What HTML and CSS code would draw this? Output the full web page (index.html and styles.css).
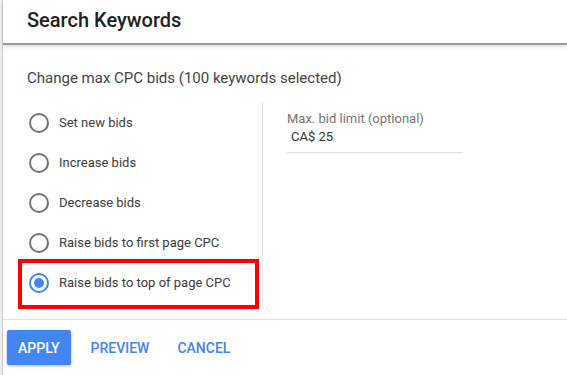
FILE: index.html
```html
<!DOCTYPE html>
<html lang="en">
<head>
    <meta charset="UTF-8">
    <meta name="viewport" content="width=device-width, initial-scale=1.0">
    <title>Search Keywords</title>
    <link rel="stylesheet" href="styles.css">
</head>
<body>
    <div class="dialog">
        <div class="dialog_head">
            <h1>Search Keywords</h1>
        </div>
        <div class="dialog_body">
            <p class="subtitle">Change max CPC bids (100 keywords selected)</p>
            <div class="cols">
                <div class="options">
                    <label class="option"><span class="radio"></span><span>Set new bids</span></label>
                    <label class="option"><span class="radio"></span><span>Increase bids</span></label>
                    <label class="option"><span class="radio"></span><span>Decrease bids</span></label>
                    <label class="option"><span class="radio"></span><span>Raise bids to first page CPC</span></label>
                    <label class="option marked"><span class="radio checked"></span><span>Raise bids to top of page CPC</span></label>
                </div>
                <div class="limit">
                    <div class="field">
                        <span class="field_label">Max. bid limit (optional)</span>
                        <span class="field_value">CA$ 25</span>
                    </div>
                </div>
            </div>
        </div>
        <div class="dialog_foot">
            <button type="button" class="btn_apply">APPLY</button>
            <button type="button" class="btn_flat">PREVIEW</button>
            <button type="button" class="btn_flat btn_cancel">CANCEL</button>
        </div>
    </div>
</body>
</html>
```

FILE: styles.css
```css
*{margin:0;padding:0;box-sizing:border-box;}
html,body{height:100%;}
body{background:#eeeeee;font-family:Roboto, "Liberation Sans", sans-serif;overflow:hidden;}
button{background:transparent;border:0;font-family:inherit;cursor:pointer;}

.dialog{margin-left:2px;height:100%;background:#fff;border-left:1px solid #c9c9c9;}
.dialog_head{position:relative;height:45px;padding:10px 0 0 24px;border-bottom:2px solid #9c9c9c;box-shadow:0 2px 3px rgba(0,0,0,0.12);}
.dialog_head h1{font-size:20px;line-height:20px;font-weight:500;color:#212121;}

.dialog_body{padding:23px 0 0 24px;}
.subtitle{font-size:15px;line-height:20px;color:#444;}

.cols{display:flex;margin-top:15px;}
.options{display:flex;flex-direction:column;width:236px;border-right:1px solid #e0e0e0;}
.option{position:relative;display:flex;align-items:center;gap:10px;height:40px;font-size:13px;line-height:20px;color:#3c3c3c;}
.option.marked:after{content:'';position:absolute;top:-4px;bottom:-6px;left:-9px;right:3px;border:4px solid #ff0000;pointer-events:none;}

.radio{position:relative;flex:none;width:20px;height:20px;margin-left:2px;border:2px solid #737373;border-radius:50%;}
.radio.checked{border-color:#4285f4;}
.radio.checked:after{content:'';position:absolute;top:3px;left:3px;width:10px;height:10px;border-radius:50%;background:#4285f4;}

.limit{padding:8px 0 0 24px;}
.field{display:flex;flex-direction:column;width:176px;border-bottom:1px solid #e0e0e0;padding-bottom:5px;}
.field_label{font-size:13px;line-height:16px;color:#757575;}
.field_value{padding-left:4px;font-size:13px;line-height:20px;color:#333;}

.dialog_foot{display:flex;align-items:center;margin-top:16px;padding:10px 0 0 4px;border-top:1px solid #e0e0e0;}
.btn_apply{height:35px;padding:0 11px;border-radius:2px;background:#4285f4;color:#fff;font-size:14px;font-weight:500;box-shadow:0 1px 3px rgba(0,0,0,0.3);}
.btn_flat{height:35px;padding:0 10px;margin-left:10px;color:#4285f4;font-size:14px;font-weight:500;}
.btn_cancel{margin-left:8px;}
```
